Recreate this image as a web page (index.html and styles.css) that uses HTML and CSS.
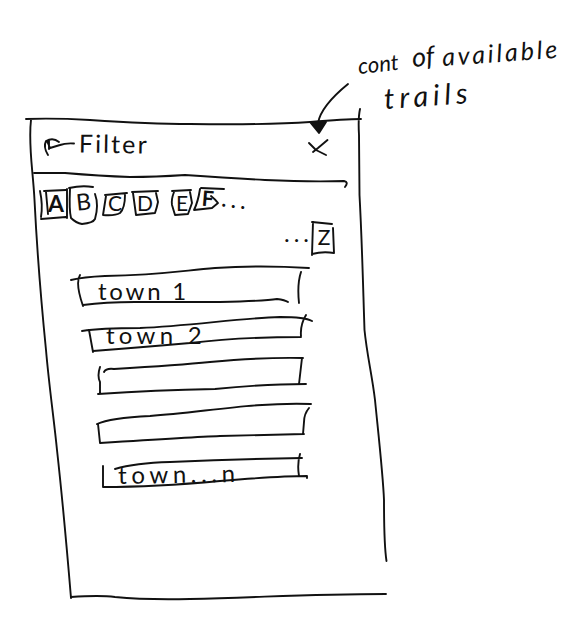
FILE: index.html
```html
<!DOCTYPE html>
<html lang="en">
<head>
<meta charset="utf-8">
<title>Town filter</title>
<link rel="stylesheet" href="styles.css">
</head>
<body>
<aside class="note">
  <p class="note-line"><span class="word-cont">cont</span><span class="word-of">of</span><span class="word-available">available</span></p>
  <p class="note-line note-second"><span class="word-trails">trails</span></p>
</aside>
<main class="panel">
  <svg class="outline" viewBox="24 108 365 492"><path d="M26 119Q55 118 90 120Q150 124 190 124Q270 125 310 122Q345 119 361 119M31 120C28 145 33 170 34.500 200C37 250 40 290 46 350C49 385 54 420 57 450C62 495 67 550 71 598M360 109Q358 118 359 135L359.500 195C362 240 363 285 364.500 330C367 355 372 375 375 400C379 440 383 475 384 500Q384 545 386.500 561M71 597Q100 595 115 597Q145 600 190 599C270 597 310 594 386 594"/></svg>
  <svg class="outline callout" viewBox="24 108 365 492"><path d="M348 84Q321 106 318 123"/><path class="solid" d="M310 122L326 122L319 133Z"/></svg>
  <header class="bar">
    <svg class="outline" viewBox="24 108 365 79"><path d="M34 173L65 173Q100 176 130 177Q155 177 185 175Q230 178 265 180Q310 182 344 181Q349 182 345 187"/></svg>
    <svg class="back" viewBox="44 136 32 20"><path d="M48 154Q43 146 46 140Q53 136 59 141M47 140L50 147L60 144M49 139L49 148M60 144Q65 142 74 142.500"/></svg>
    <h1 class="title">Filter</h1>
    <svg class="close" viewBox="307 139 22 19"><path d="M309 144L316 151L326 156M327.500 141L318 149L313 153"/></svg>
  </header>
  <nav class="letters">
    <span class="chip chip-a"><svg class="outline" viewBox="39 186 29 34"><path d="M40 191Q43 205 41 217M44 191L66 190M46 192L48 214M67 189L67 218M41 219L66 217"/></svg><b>A</b></span>
    <span class="chip chip-b"><svg class="outline" viewBox="68 186 30 38"><path d="M69 188Q82 185 93 187M70 189Q69 210 71 218Q76 223 82 224Q93 223 95 219Q99 205 95 194"/></svg><b>B</b></span>
    <span class="chip chip-c"><svg class="outline" viewBox="102 186 26 34"><path d="M105 195L127 193M106 196L103 215Q115 216 120 213Q125 208 125 195"/></svg><b>C</b></span>
    <span class="chip chip-d"><svg class="outline" viewBox="131 186 28 34"><path d="M132 192L158 191M133 193L136 215L155 213Q157 207 158 202L156 193"/></svg><b>D</b></span>
    <span class="chip chip-e"><svg class="outline" viewBox="171 186 22 34"><path d="M172 191L191 190M174 192Q171 200 172 205L175 215L188 214L192 203L190 192"/></svg><b>E</b></span>
    <span class="chip chip-f"><svg class="outline" viewBox="194 186 31 34"><path d="M201 188L224 189M200 189Q198 202 194 210L212 208L218 203Q216 200 211 196"/></svg><b>F</b></span>
    <span class="dots dots-first">...</span>
  </nav>
  <nav class="letters last">
    <span class="dots dots-last">...</span>
    <span class="chip chip-z"><svg class="outline" viewBox="311 221 24 35"><path d="M312 222L332 224M313 222L312 255M333 228L334 253M312 254Q323 251 334 253"/></svg><b>Z</b></span>
  </nav>
  <ul class="towns">
    <li class="town"><svg class="outline" viewBox="70 263 243 48"><path d="M71 280Q83 277 105 276C160 275 180 271 215 268Q260 265 309 268M80 275Q75 283 83 306M83 305Q105 302 135 302L220 302Q265 301 277 299Q285 300 288 302M301 272Q297 284 299 303"/></svg><span class="name name-one">town 1</span></li>
    <li class="town"><svg class="outline" viewBox="70 311 243 44"><path d="M82 331Q100 328 140 328C190 326 240 318 280 317Q305 317 312 321M89 330L93 352M93 351Q145 347 190 343Q240 337 301 337M306 315Q300 325 301 336"/></svg><span class="name name-two">town 2</span></li>
    <li class="town"><svg class="outline" viewBox="70 355 243 44"><path d="M104 372Q106 368 114 369Q180 365 210 362Q265 357 303 358M100 367Q97 376 100 382L100 393M98 394Q155 390 215 389Q265 384 306 384M302 358L299 384"/></svg></li>
    <li class="town"><svg class="outline" viewBox="70 399 243 50"><path d="M97 424Q110 418 150 416C205 412 255 402 311 404M98 424L100 443M100 443Q195 437 220 436L304 434M309 408Q304 414 304 422L303 434"/></svg></li>
    <li class="town"><svg class="outline" viewBox="70 449 243 44"><path d="M103 466L103 487M115 469Q135 463 170 462Q240 459 302 458M103 487Q155 487 220 481Q280 476 307 476L307 478M300 454Q297 464 299 476"/></svg><span class="name name-last">town...n</span></li>
  </ul>
</main>
</body>
</html>
```
FILE: styles.css
```css
* { box-sizing: border-box; }

body {
  width: 573px;
  height: 628px;
  margin: 0;
  overflow: hidden;
  background: #fff;
  color: #111;
  font-family: Lato, "Open Sans", sans-serif;
}

p, h1, ul { margin: 0; padding: 0; }

svg {
  fill: none;
  stroke: #111;
  stroke-width: 1.9;
  stroke-linecap: round;
  stroke-linejoin: round;
  overflow: visible;
}

.outline {
  position: absolute;
  inset: 0;
  width: 100%;
  height: 100%;
}

.callout { pointer-events: none; }
.solid { fill: #111; }

.note { height: 108px; padding: 40px 0 0 358px; }
.note-line {
  display: flex;
  height: 34px;
  font-size: 22px;
  line-height: 34px;
  font-style: italic;
  white-space: nowrap;
}
.note-line span { display: block; transform-origin: left center; }
.word-cont { width: 54px; transform: translateY(9px) rotate(-6deg); }
.word-of { width: 30px; font-size: 27px; transform: rotate(-5deg); }
.word-available { font-size: 25px; letter-spacing: 2.9px; transform: translateY(-1px) rotate(-4deg); }
.note-second { padding-left: 26px; }
.word-trails { font-size: 29px; letter-spacing: 4.9px; transform: translateY(7px) rotate(-4deg); }

.panel {
  position: relative;
  width: 365px;
  height: 492px;
  margin-left: 24px;
}

.bar {
  position: relative;
  display: flex;
  align-items: center;
  height: 78px;
  padding: 0 60px 0 20px;
}
.bar .outline { height: 79px; }
.back { width: 32px; height: 20px; }
.title {
  margin-left: 3px;
  font-size: 25px;
  font-weight: 400;
  line-height: 30px;
  letter-spacing: 2.1px;
  transform: translateY(-4px) rotate(1deg);
}
.close { width: 22px; height: 19px; margin-left: auto; }

.letters { display: flex; height: 35px; padding-left: 15px; }
.chip {
  position: relative;
  display: flex;
  align-items: center;
  justify-content: center;
  height: 34px;
}
.chip b { font-size: 21px; font-weight: 400; line-height: 24px; }
.chip-a { width: 29px; padding-left: 5px; }
.chip-a b { font-size: 23px; font-weight: 700; }
.chip-b { width: 30px; height: 38px; }
.chip-b b { font-size: 23px; transform: translateY(-4px) rotate(-6deg); }
.chip-c { width: 26px; margin-left: 4px; }
.chip-d { width: 28px; margin-left: 3px; }
.chip-e { width: 22px; margin-left: 12px; }
.chip-f { width: 31px; margin-left: 1px; }
.chip-f b { font-weight: 700; transform: translate(-2px, -5px) rotate(5deg); }
.dots { font-size: 24px; line-height: 24px; }
.dots-first { letter-spacing: 4px; transform: translate(-4px, 1px) rotate(7deg); }
.last { height: 42px; padding-left: 260px; }
.dots-last { width: 27px; letter-spacing: 4px; }
.chip-z { width: 24px; height: 35px; }
.chip-z b { transform: translate(1px, -2px); }

.towns { width: 243px; margin-left: 46px; list-style: none; }
.town { position: relative; height: 44px; }
.town:first-child { height: 48px; }
.town:nth-child(4) { height: 50px; }
.name {
  display: block;
  width: max-content;
  font-size: 24px;
  line-height: 28px;
  transform-origin: left center;
}
.name-one { margin-left: 28px; padding-top: 14px; letter-spacing: 2.8px; }
.name-two { margin-left: 36px; padding-top: 10px; letter-spacing: 4.3px; }
.name-last { margin-left: 48px; padding-top: 12px; letter-spacing: 4.6px; transform: rotate(-1deg); }
```
